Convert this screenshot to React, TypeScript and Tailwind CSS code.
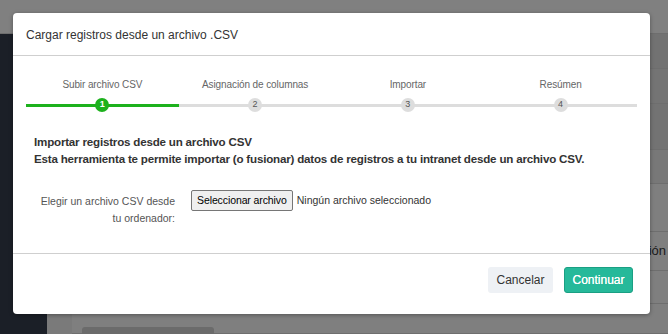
import React from "react";

const steps = ["Subir archivo CSV", "Asignación de columnas", "Importar", "Resúmen"];

const bgRows = [
  { h: "h-[36px]", bg: "bg-[#727272]" },
  { h: "h-[35px]", bg: "bg-[#747474]" },
  { h: "h-[47px]", bg: "bg-[#737373]" },
  { h: "h-[35px]", bg: "bg-[#787878]" },
  { h: "h-[48px]", bg: "bg-[#7f7f7f]" },
  { h: "h-[40px]", bg: "bg-[#7f7f7f]", text: "Acción" },
  { h: "h-[34px]", bg: "bg-[#7f7f7f]" },
  { h: "h-[30px]", bg: "bg-[#7f7f7f]" },
];

const Stepper: React.FC = () => {
  return (
    <div className="grid grid-cols-4 px-[13px] pt-[22px]">
      {steps.map((label, i) => {
        const done = i === 0;
        return (
          <div key={label} className="flex flex-col items-center">
            <span className="text-[10px] leading-[13px] tracking-[-0.1px] text-[#666]">{label}</span>
            <div className="relative mt-[7px] flex h-[14px] w-full items-center justify-center">
              <div
                className={`absolute left-0 right-0 top-[6px] h-[3px] ${
                  done ? "bg-[#1db11d]" : "bg-[#dddddd]"
                }`}
              />
              <div
                className={`relative flex h-[14px] w-[14px] items-center justify-center rounded-full text-[9px] ${
                  done ? "bg-[#1db11d] font-bold text-white" : "bg-[#dddddd] text-[#555]"
                }`}
              >
                {i + 1}
              </div>
            </div>
          </div>
        );
      })}
    </div>
  );
};

export default function App() {
  return (
    <div
      className="relative h-[334px] w-[668px] overflow-hidden bg-[#808080]"
      style={{ fontFamily: '"Liberation Sans", Arial, sans-serif' }}
    >
      {/* page behind the overlay */}
      <div className="h-[34px] border-b border-[#6e6e6e] bg-[#808080]" />
      <div className="flex h-[300px]">
        <div className="w-[47px] bg-[#1b1f27]" />
        <div className="w-[25px] bg-[#7a7a7a]" />
        <div className="flex flex-1 flex-col">
          {bgRows.map((r, i) => (
            <div
              key={i}
              className={`${r.h} ${r.bg} flex items-center justify-end border-b border-[#6e6e6e] pr-[2px] text-[13px] text-[#1a1a1a]`}
            >
              {r.text}
            </div>
          ))}
        </div>
      </div>
      <div className="absolute left-[82px] top-[327px] h-[20px] w-[132px] rounded-[3px] bg-[#6b6b6b]" />

      {/* modal */}
      <div className="absolute left-[13px] top-[13px] flex h-[301px] w-[637px] flex-col rounded-[4px] bg-white shadow-[0_1px_4px_rgba(0,0,0,0.35)]">
        <div className="flex h-[43px] items-center border-b border-[#cfcfcf] px-[13px] pt-[1px]">
          <h2 className="text-[12px] font-normal text-[#333]">Cargar registros desde un archivo .CSV</h2>
        </div>

        <div className="flex-1">
          <Stepper />

          <div className="whitespace-nowrap px-[21px] pt-[21px] text-[11.6px] font-bold leading-[17px] tracking-[-0.2px] text-[#333]">
            <p>Importar registros desde un archivo CSV</p>
            <p>
              Esta herramienta te permite importar (o fusionar) datos de registros a tu intranet desde un archivo
              CSV.
            </p>
          </div>

          <div className="mt-[23px] flex items-start gap-[16px]">
            <div className="w-[162px] pt-[3px] text-right text-[10.5px] leading-[17px] text-[#555]">
              Elegir un archivo CSV desde
              <br />
              tu ordenador:
            </div>
            <div className="flex items-center gap-[4px]">
              <span className="flex h-[21px] items-center rounded-[2px] border border-[#767676] bg-[#efefef] px-[5px] text-[10.5px] tracking-[-0.1px] text-black">
                Seleccionar archivo
              </span>
              <span className="text-[10.5px] text-[#333]">Ningún archivo seleccionado</span>
            </div>
          </div>
        </div>

        <div className="flex h-[61px] items-start justify-end gap-[11px] border-t border-[#cfcfcf] pr-[17px] pt-[13px]">
          <button className="h-[26px] w-[65px] rounded-[3px] bg-[#eef1f5] text-[12px] text-[#333]">
            Cancelar
          </button>
          <button className="h-[26px] w-[69px] rounded-[3px] border border-[#1a9f83] bg-[#26b99a] text-[12px] text-white [text-shadow:0_0_0.5px_#fff]">
            Continuar
          </button>
        </div>
      </div>
    </div>
  );
}
